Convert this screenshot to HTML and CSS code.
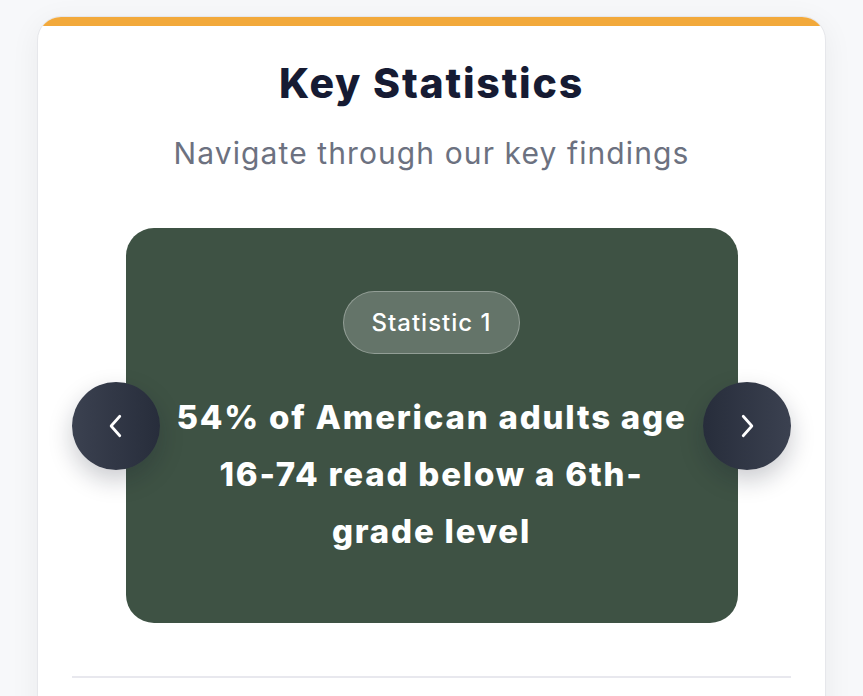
FILE: index.html
```html
<!DOCTYPE html>
<html lang="en">
<head>
<meta charset="utf-8">
<title>Key Statistics</title>
<link rel="stylesheet" href="styles.css">
</head>
<body>
  <section class="card">
    <div class="card-bar"></div>
    <div class="card-body">
      <h2 class="title">Key Statistics</h2>
      <p class="subtitle">Navigate through our key findings</p>
      <div class="slider">
        <button class="nav nav-prev" aria-label="Previous">
          <svg width="26" height="26" viewBox="0 0 24 24" fill="none" stroke="#fff" stroke-width="2.5" stroke-linecap="round" stroke-linejoin="round"><path d="M15.5 3 7.5 12l8 9"/></svg>
        </button>
        <div class="slide">
          <span class="badge">Statistic 1</span>
          <p class="stat">54% of American adults age 16-74 read below a 6th-grade level</p>
        </div>
        <button class="nav nav-next" aria-label="Next">
          <svg width="26" height="26" viewBox="0 0 24 24" fill="none" stroke="#fff" stroke-width="2.5" stroke-linecap="round" stroke-linejoin="round"><path d="M8.5 3l8 9-8 9"/></svg>
        </button>
      </div>
      <hr class="divider">
    </div>
  </section>
</body>
</html>
```
FILE: styles.css
```css
* { box-sizing: border-box; }
html, body { margin: 0; height: 100%; }
body {
  background: #f7f8fa;
  padding: 16px 37px 0;
  font-family: "Inter", "Open Sans", sans-serif;
  overflow: hidden;
}
.card {
  background: #fff;
  border: 1px solid #e6e7eb;
  border-radius: 24px;
  overflow: hidden;
  box-shadow: 0 6px 30px rgba(20, 24, 40, 0.06);
  min-height: 760px;
}
.card-bar {
  height: 9px;
  background: #f2a93b;
}
.card-body {
  padding: 33px 34px 0;
  display: flex;
  flex-direction: column;
  align-items: center;
}
.title {
  margin: 0;
  font-size: 41px;
  line-height: 48px;
  font-weight: 800;
  color: #161b33;
  letter-spacing: 1.8px;
}
.subtitle {
  margin: 26px 0 0;
  font-size: 30px;
  line-height: 40px;
  font-weight: 400;
  color: #6c7180;
  letter-spacing: 1.1px;
}
.slider {
  position: relative;
  align-self: stretch;
  margin-top: 55px;
  display: flex;
  justify-content: center;
}
.slide {
  width: 612px;
  height: 395px;
  background: #3e5244;
  border-radius: 28px;
  padding: 63px 40px 0;
  display: flex;
  flex-direction: column;
  align-items: center;
}
.badge {
  display: inline-block;
  padding: 0 28px;
  height: 63px;
  line-height: 61px;
  border-radius: 32px;
  background: rgba(255, 255, 255, 0.2);
  border: 1px solid rgba(255, 255, 255, 0.3);
  color: #fff;
  font-size: 24px;
  font-weight: 500;
  letter-spacing: 1px;
}
.stat {
  margin: 35px 0 0;
  max-width: 520px;
  text-align: center;
  color: #fff;
  font-size: 33px;
  line-height: 57px;
  font-weight: 800;
  letter-spacing: 1.8px;
}
.nav {
  position: absolute;
  top: 50%;
  width: 88px;
  height: 88px;
  margin-top: -44px;
  border: none;
  border-radius: 50%;
  box-shadow: 0 10px 24px rgba(15, 20, 35, 0.22);
  display: flex;
  align-items: center;
  justify-content: center;
  padding: 0;
  cursor: pointer;
}
.nav-prev { left: 0; background: linear-gradient(90deg, #3b4150, #272d3b); }
.nav-next { right: 0; background: linear-gradient(90deg, #272d3b, #3b4150); }
.divider {
  align-self: stretch;
  margin: 53px 0 0;
  border: none;
  height: 2px;
  background: #e8e8ee;
}
```
